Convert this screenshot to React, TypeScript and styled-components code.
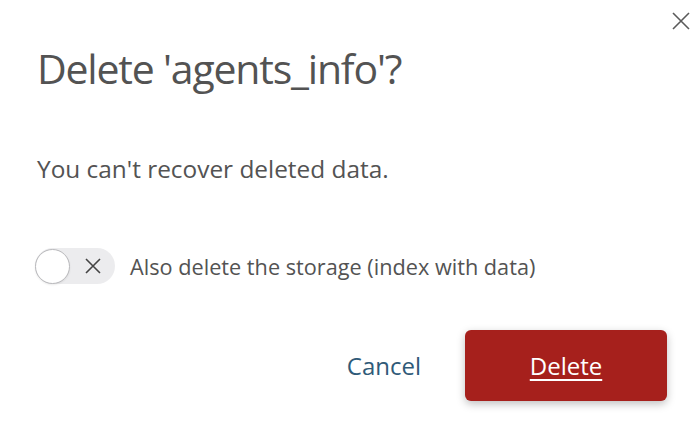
import React, { useState } from 'react';
import styled, { createGlobalStyle } from 'styled-components';

const GlobalStyle = createGlobalStyle`
  html, body {
    margin: 0;
    padding: 0;
    background: #ffffff;
  }
  body {
    font-family: 'Open Sans', 'Liberation Sans', sans-serif;
  }
`;

const App: React.FC = () => {
  const [deleteStorage, setDeleteStorage] = useState(false);

  return (
    <>
      <GlobalStyle />
      <Modal>
        <CloseButton aria-label="Close">
          <svg width="18" height="18" viewBox="0 0 18 18" fill="none">
            <path d="M1 1L17 17M17 1L1 17" stroke="#5a5a5a" strokeWidth="1.6" />
          </svg>
        </CloseButton>

        <Title>Delete 'agents_info'?</Title>
        <Message>You can't recover deleted data.</Message>

        <ToggleRow>
          <Toggle
            type="button"
            $on={deleteStorage}
            onClick={() => setDeleteStorage(!deleteStorage)}
          >
            <Knob />
            <ToggleIcon>
              <svg width="16" height="16" viewBox="0 0 16 16" fill="none">
                <path d="M1 1L15 15M15 1L1 15" stroke="#444" strokeWidth="1.6" />
              </svg>
            </ToggleIcon>
          </Toggle>
          <ToggleLabel>Also delete the storage (index with data)</ToggleLabel>
        </ToggleRow>

        <Footer>
          <CancelButton type="button">Cancel</CancelButton>
          <DeleteButton type="button">Delete</DeleteButton>
        </Footer>
      </Modal>
    </>
  );
};

const Modal = styled.div`
  position: relative;
  box-sizing: border-box;
  width: 700px;
  height: 441px;
  padding: 38px 33px 0 37px;
  background: #ffffff;
  display: flex;
  flex-direction: column;
`;

const CloseButton = styled.button`
  position: absolute;
  top: 11px;
  right: 9px;
  width: 20px;
  height: 20px;
  padding: 0;
  border: none;
  background: none;
  display: flex;
  align-items: center;
  justify-content: center;
  cursor: pointer;
`;

const Title = styled.h1`
  margin: 0;
  font-size: 41px;
  font-weight: 400;
  line-height: 60px;
  color: #535353;
  letter-spacing: -1.2px;
`;

const Message = styled.p`
  margin: 55px 0 0;
  font-size: 24.4px;
  font-weight: 400;
  line-height: 32px;
  color: #535353;
`;

const ToggleRow = styled.div`
  display: flex;
  align-items: center;
  gap: 15px;
  margin-top: 63px;
  margin-left: -2px;
`;

const Toggle = styled.button<{ $on: boolean }>`
  position: relative;
  box-sizing: border-box;
  width: 80px;
  height: 36px;
  padding: 0;
  border: none;
  border-radius: 18px;
  background: ${({ $on }) => ($on ? '#2f5a78' : '#ececee')};
  cursor: pointer;
  display: flex;
  align-items: center;
`;

const Knob = styled.span`
  box-sizing: border-box;
  width: 35px;
  height: 35px;
  border-radius: 50%;
  background: #ffffff;
  border: 1px solid #b9b9bc;
  box-shadow: 0 1px 2px rgba(0, 0, 0, 0.08);
`;

const ToggleIcon = styled.span`
  display: flex;
  margin-left: 15px;
`;

const ToggleLabel = styled.span`
  font-size: 21.7px;
  color: #535353;
`;

const Footer = styled.div`
  display: flex;
  align-items: center;
  justify-content: flex-end;
  gap: 44px;
  margin-top: 46px;
`;

const CancelButton = styled.button`
  border: none;
  background: none;
  padding: 0;
  font-family: inherit;
  font-size: 24px;
  color: #2f5a78;
  cursor: pointer;
`;

const DeleteButton = styled.button`
  width: 202px;
  height: 71px;
  border: none;
  border-radius: 6px;
  background: #a6201c;
  color: #ffffff;
  font-family: inherit;
  font-size: 24px;
  text-decoration: underline;
  text-underline-offset: 4px;
  box-shadow: 0 3px 8px rgba(0, 0, 0, 0.25);
  cursor: pointer;
`;

export default App;
